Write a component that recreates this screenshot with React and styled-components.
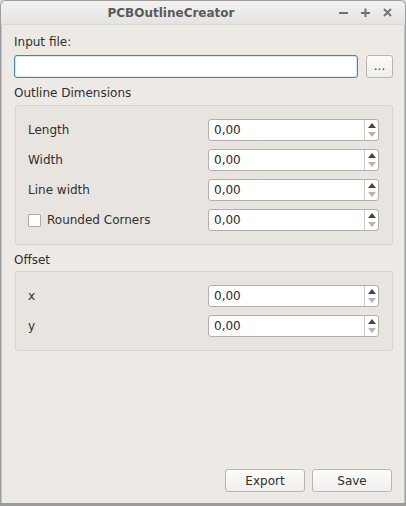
import React from "react";
import styled, { createGlobalStyle } from "styled-components";

const Global = createGlobalStyle`
  html, body { margin: 0; padding: 0; background: #dcdcdc; }
  * { box-sizing: border-box; }
  body { font-family: "DejaVu Sans", "Liberation Sans", sans-serif; font-size: 12px; color: #2f2f2f; }
`;

const Window = styled.div`
  width: 406px;
  height: 506px;
  display: flex;
  flex-direction: column;
  background: #edeae6;
  border: 1px solid #9c9c9c;
  border-bottom-width: 3px;
  border-radius: 6px 6px 0 0;
  overflow: hidden;
  box-shadow: inset 1px 0 0 #c4c4c4, inset -1px 0 0 #c4c4c4;
`;

const TitleBar = styled.div`
  height: 24px;
  flex: none;
  display: flex;
  align-items: center;
  background: linear-gradient(#f2f2f1, #e4e3e1);
  border-bottom: 1px solid #dad8d5;
`;

const Title = styled.div`
  flex: 1;
  text-align: center;
  font-weight: bold;
  font-size: 12px;
  color: #5a5a5a;
  padding-left: 2px;
`;

const Controls = styled.div`
  display: flex;
  align-items: center;
  gap: 13px;
  padding-right: 12px;
  width: 66px;
`;

const Ctl = styled.svg`
  width: 9px;
  height: 9px;
  display: block;
`;

const Content = styled.div`
  flex: 1;
  display: flex;
  flex-direction: column;
  padding: 8px 12px 11px 13px;
`;

const Label = styled.div`
  line-height: 16px;
  margin-top: ${(p) => p.$mt || 0}px;
  margin-bottom: ${(p) => p.$mb || 0}px;
`;

const FileRow = styled.div`
  display: flex;
  gap: 8px;
  height: 23px;
`;

const LineEdit = styled.div`
  flex: 1;
  background: #fff;
  border: 1px solid #3d86c6;
  border-radius: 3px;
  box-shadow: inset 0 0 0 0.5px rgba(61, 134, 198, 0.35);
`;

const SmallButton = styled.button`
  width: 27px;
  height: 23px;
  padding: 0 0 2px 0;
  font-family: inherit;
  font-size: 12px;
  color: #333;
  background: linear-gradient(#fbfbfb, #efeeec);
  border: 1px solid #b9b6b2;
  border-radius: 3px;
  line-height: 1;
`;

const Group = styled.div`
  margin-top: ${(p) => p.$mt || 3}px;
  margin-left: 1px;
  background: #e8e5e1;
  border: 1px solid #d7d4d0;
  border-radius: 2px;
  padding: 13px 13px 13px 12px;
  display: grid;
  grid-template-columns: 1fr 171px;
  row-gap: 8px;
  align-items: center;
`;

const RowLabel = styled.div`
  display: flex;
  align-items: center;
  gap: 6px;
  color: #2f2f2f;
`;

const Check = styled.span`
  width: 13px;
  height: 13px;
  background: #fff;
  border: 1px solid #aeaba7;
  border-radius: 1px;
`;

const Spin = styled.div`
  height: 22px;
  display: flex;
  background: #fff;
  border: 1px solid #b3b0ac;
  border-radius: 3px;
  overflow: hidden;
`;

const SpinText = styled.div`
  flex: 1;
  padding-left: 5px;
  line-height: 20px;
  color: #2a2a2a;
`;

const SpinButtons = styled.div`
  width: 14px;
  border-left: 1px solid #cfccc8;
  display: flex;
  flex-direction: column;
  align-items: center;
  justify-content: center;
  gap: 4px;
`;

const Arrow = styled.span`
  width: 0;
  height: 0;
  border-left: 4px solid transparent;
  border-right: 4px solid transparent;
  ${(p) =>
    p.$up
      ? `border-bottom: 5px solid #454545;`
      : `border-top: 5px solid #b4b4b4;`}
`;

const Footer = styled.div`
  margin-top: auto;
  display: flex;
  justify-content: flex-end;
  gap: 7px;
  padding-right: 1px;
`;

const PushButton = styled.button`
  width: 80px;
  height: 23px;
  font-family: inherit;
  font-size: 12px;
  color: #2f2f2f;
  background: linear-gradient(#fcfcfc, #f0efed);
  border: 1px solid #b9b6b2;
  border-radius: 3px;
  padding: 0;
`;

function SpinBox() {
  return (
    <Spin>
      <SpinText>0,00</SpinText>
      <SpinButtons>
        <Arrow $up />
        <Arrow />
      </SpinButtons>
    </Spin>
  );
}

function Row({ label, check }) {
  return (
    <>
      <RowLabel>
        {check && <Check />}
        {label}
      </RowLabel>
      <SpinBox />
    </>
  );
}

export default function App() {
  return (
    <>
      <Global />
      <Window>
        <TitleBar>
          <Title>PCBOutlineCreator</Title>
          <Controls>
            <Ctl viewBox="0 0 9 9">
              <path d="M0 5h9" stroke="#707070" strokeWidth="2" />
            </Ctl>
            <Ctl viewBox="0 0 9 9">
              <path d="M0 5h9M4.5 0.5v9" stroke="#707070" strokeWidth="2" />
            </Ctl>
            <Ctl viewBox="0 0 9 9">
              <path d="M1 1l7 7M8 1l-7 7" stroke="#707070" strokeWidth="1.8" />
            </Ctl>
          </Controls>
        </TitleBar>
        <Content>
          <Label $mt={1} $mb={5}>Input file:</Label>
          <FileRow>
            <LineEdit />
            <SmallButton>...</SmallButton>
          </FileRow>
          <Label $mt={7}>Outline Dimensions</Label>
          <Group $mt={4}>
            <Row label="Length" />
            <Row label="Width" />
            <Row label="Line width" />
            <Row label="Rounded Corners" check />
          </Group>
          <Label $mt={7}>Offset</Label>
          <Group>
            <Row label="x" />
            <Row label="y" />
          </Group>
          <Footer>
            <PushButton>Export</PushButton>
            <PushButton>Save</PushButton>
          </Footer>
        </Content>
      </Window>
    </>
  );
}
